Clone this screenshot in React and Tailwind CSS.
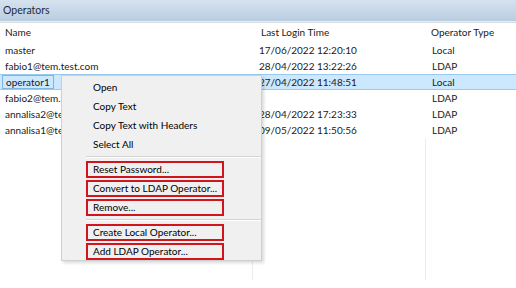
import React from 'react';

const ROWS = [
    { name: 'master', time: '17/06/2022 12:20:10', type: 'Local' },
    { name: 'fabio1@tem.test.com', time: '28/04/2022 13:22:26', type: 'LDAP' },
    { name: 'operator1', time: '27/04/2022 11:48:51', type: 'Local', selected: true },
    { name: 'fabio2@tem.test.com', time: '', type: 'LDAP' },
    { name: 'annalisa2@tem.test.com', time: '28/04/2022 17:23:33', type: 'LDAP' },
    { name: 'annalisa1@tem.test.com', time: '09/05/2022 11:50:56', type: 'LDAP' },
];

const MenuItem = ({ label, boxed }) => (
    <div className="h-[19px] flex items-center whitespace-nowrap">
        {boxed ? (
            <div className="ml-[24px] w-[138px] h-[17px] border-2 border-[#d2141c] flex items-center pl-[5px]">{label}</div>
        ) : (
            <div className="pl-[31px]">{label}</div>
        )}
    </div>
);

const Separator = () => (
    <div className="h-[6px] flex items-center pl-[24px]">
        <div className="w-full border-t border-[#d4d4d4] border-b border-b-white"></div>
    </div>
);

const App = () => {
    return (
        <div className="relative w-[516px] h-[288px] bg-white overflow-hidden text-[10px] text-[#1a1a1a] whitespace-nowrap" style={{ fontFamily: 'Lato, "Noto Sans", sans-serif' }}>
            <div className="h-[21px] bg-gradient-to-b from-[#d6e2ef] to-[#b9cde0] flex items-center pl-[3px] text-[10.5px] text-[#1e2a3a]">Operators</div>
            <div className="h-[2px] bg-[#e9eef3] border-b border-[#d8dde3]"></div>

            <div className="relative">
                <div className="flex h-[19px] items-center">
                    <div className="w-[253px] pl-[5px]">Name</div>
                    <div className="w-[173px] pl-[8px]">Last Login Time</div>
                    <div className="flex-1 pl-[5px]">Operator Type</div>
                </div>
                {ROWS.map(r => (
                    <div key={r.name} className={`flex h-[16px] items-center ${r.selected ? 'bg-[#cce8ff] border-y border-[#99c9ef]' : ''}`}>
                        <div className="w-[253px] pl-[2px] overflow-hidden">
                            <span className={`px-[3px] ${r.selected ? 'border border-[#7fb5e0]' : ''}`}>{r.name}</span>
                        </div>
                        <div className="w-[173px] pl-[6px]">{r.time}</div>
                        <div className="flex-1 pl-[6px]">{r.type}</div>
                    </div>
                ))}
                <div className="flex h-[142px]">
                    <div className="w-[253px] border-r border-[#ececec]"></div>
                    <div className="w-[173px] border-r border-[#ececec]"></div>
                </div>
            </div>

            <div className="absolute left-[61px] top-[75px] w-[201px] h-[186px] bg-[#f0f0f0] border border-[#cfcfcf] shadow-[2px_2px_3px_rgba(0,0,0,0.15)] pt-[2px] text-[10px] text-black">
                <MenuItem label="Open" />
                <MenuItem label="Copy Text" />
                <MenuItem label="Copy Text with Headers" />
                <MenuItem label="Select All" />
                <Separator />
                <MenuItem label="Reset Password..." boxed />
                <MenuItem label="Convert to LDAP Operator..." boxed />
                <MenuItem label="Remove..." boxed />
                <Separator />
                <MenuItem label="Create Local Operator..." boxed />
                <MenuItem label="Add LDAP Operator..." boxed />
            </div>
        </div>
    );
};

export default App;
